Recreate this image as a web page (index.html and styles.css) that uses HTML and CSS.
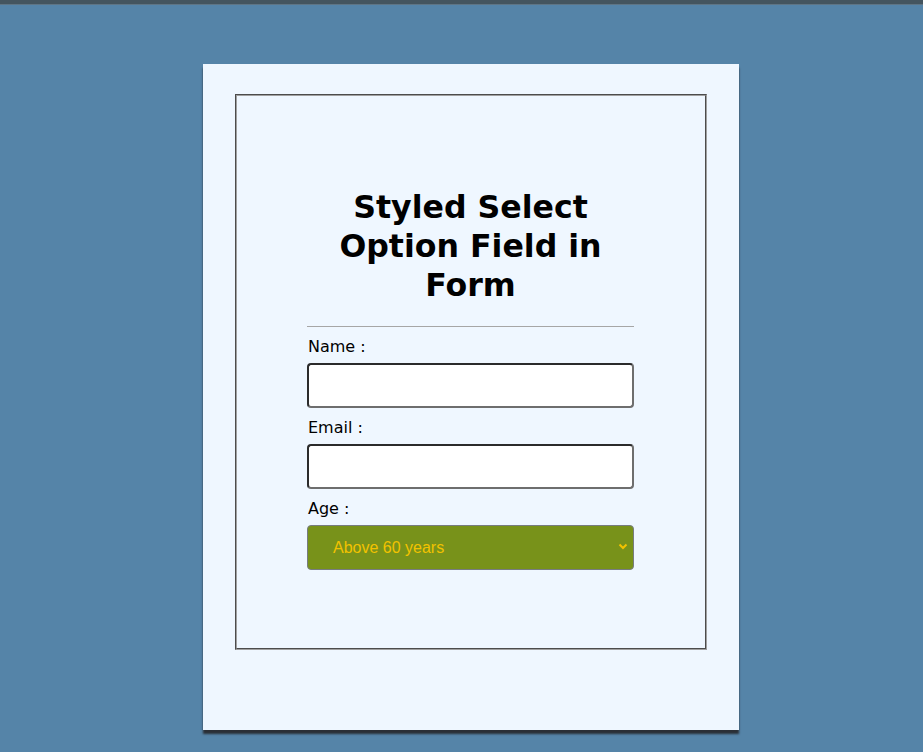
FILE: index.html
```html
<!DOCTYPE html>
<html>
<head>
<meta charset="utf-8">
<link rel="stylesheet" href="styles.css">
</head>
<body>
<div class="topbar"></div>
<div class="page">
  <div class="card">
    <div class="frame">
      <form class="form">
        <h1 class="title">Styled Select Option Field in Form</h1>
        <hr class="rule">
        <label class="label">Name :</label>
        <input class="field" type="text">
        <label class="label">Email :</label>
        <input class="field" type="text">
        <label class="label">Age :</label>
        <div class="select-wrap">
          <select class="select">
            <option>Above 60 years</option>
          </select>
          <svg class="chev" width="10" height="7" viewBox="0 0 10 7"><path d="M1.5 1.5 L5 5 L8.5 1.5" fill="none" stroke="#f2c200" stroke-width="2"/></svg>
        </div>
      </form>
    </div>
  </div>
</div>
</body>
</html>
```
FILE: styles.css
```css
html, body {
  margin: 0;
  padding: 0;
}
body {
  background: #5584a8;
  font-family: "DejaVu Sans", Verdana, sans-serif;
  height: 752px;
  overflow: hidden;
}
.topbar {
  height: 4px;
  background: #44555f;
  border-bottom: 1px solid #5f7585;
}
.page {
  padding: 59px 0 0 203px;
}
.card {
  width: 536px;
  height: 666px;
  box-sizing: border-box;
  background: #eff7ff;
  padding: 30px 32px 0 32px;
  box-shadow: 0 4px 2px #2a2f36;
}
.frame {
  height: 556px;
  box-sizing: border-box;
  border: 2px groove #a0a0a0;
  display: flex;
  padding-left: 70px;
}
.form {
  width: 327px;
  display: flex;
  flex-direction: column;
  padding-top: 92px;
}
.title {
  margin: 0;
  font-size: 31.6px;
  line-height: 39px;
  font-weight: bold;
  text-align: center;
  color: #000;
  padding: 0 30px;
}
.rule {
  margin: 21px 0 0 0;
  border: 0;
  border-top: 1px solid #a6a6a6;
  height: 0;
}
.label {
  font-size: 16px;
  line-height: 19px;
  margin: 10px 0 7px 1px;
  color: #000;
}
.field {
  height: 45px;
  box-sizing: border-box;
  border: 2px solid #2b2b2b;
  border-right-color: #6e6e6e;
  border-bottom-color: #6e6e6e;
  border-radius: 4px;
  background: #fff;
  margin: 0;
}
.select-wrap {
  position: relative;
}
.select {
  width: 100%;
  height: 45px;
  box-sizing: border-box;
  appearance: none;
  -webkit-appearance: none;
  background: #78921a;
  color: #f2c200;
  border: 1px solid #777c80;
  border-radius: 4px;
  font-family: "Liberation Sans", Arial, sans-serif;
  font-size: 16px;
  padding: 0 0 0 25px;
  margin: 0;
}
.chev {
  position: absolute;
  right: 6px;
  top: 18px;
}
```
